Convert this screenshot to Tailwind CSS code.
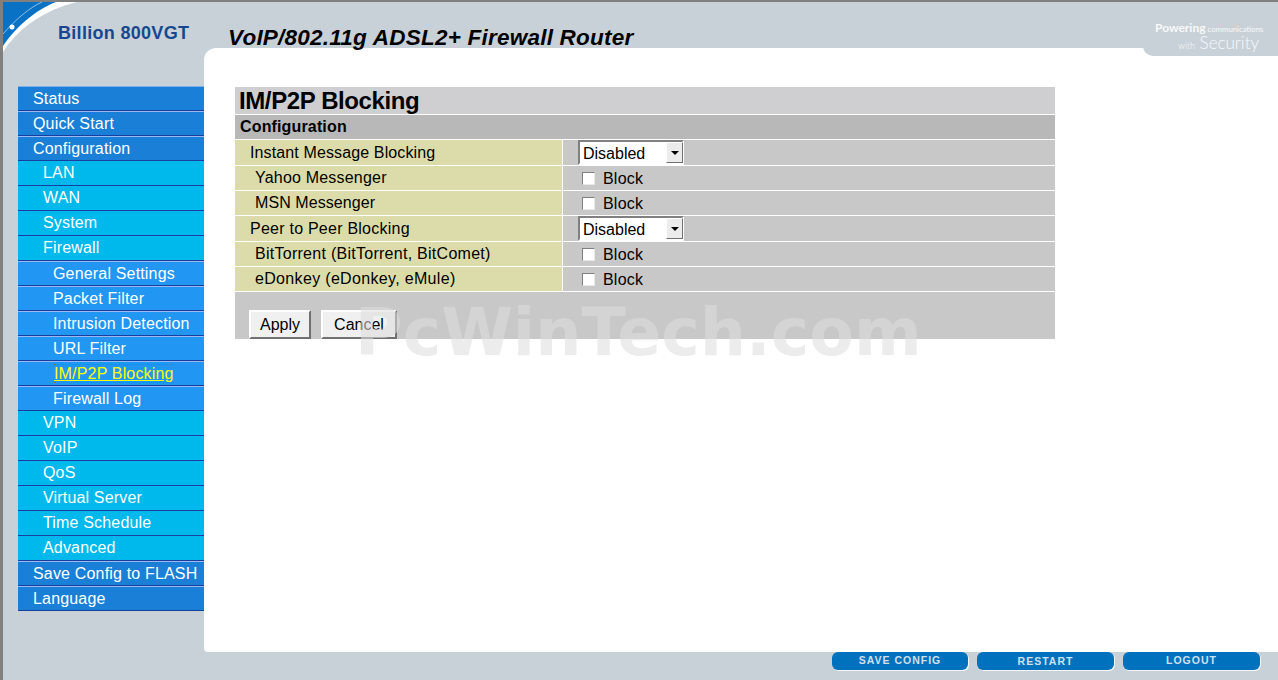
<!DOCTYPE html>
<html lang="en">
  <head>
    <meta charset="UTF-8" />
    <title>Billion 800VGT</title>
    <script src="https://cdn.jsdelivr.net/npm/@tailwindcss/browser@4"></script>
  </head>
  <body class="w-[1278px] h-[680px] overflow-hidden bg-[#c9d1d8] font-['Liberation_Sans',Arial,sans-serif] text-black">
    <div class="relative h-full flex flex-col border-t-2 border-l-[3px] border-[#808080]">
      <!-- logo corner -->
      <svg class="absolute left-0 top-0" width="76" height="52" viewBox="0 0 76 52">
        <path d="M0 50 C14 28 40 8 74 0 L53 0 C32 6 14 20 0 40 Z" fill="#ffffff" />
        <path d="M0 44 C12 26 32 8 53 0 L0 0 Z" fill="#0a72c4" />
        <path d="M0 32 C12 18 26 6 39 0" fill="none" stroke="#8fc0e6" stroke-width="1" />
        <circle cx="9" cy="25" r="2.5" fill="#ffffff" />
      </svg>

      <!-- header -->
      <header class="relative h-[46px] shrink-0">
        <div class="absolute left-[55px] top-[20px] text-[18px] leading-[22px] font-bold tracking-[0.3px] text-[#17488f]">Billion 800VGT</div>
        <div class="absolute left-[225px] top-[23px] text-[22.5px] leading-[26px] font-bold italic tracking-[0.23px] whitespace-nowrap">VoIP/802.11g ADSL2+ Firewall Router</div>
      </header>

      <div class="flex flex-1 min-h-0">
        <!-- sidebar -->
        <nav class="w-[186px] ml-[15px] pt-[38px] shrink-0 text-[16px] tracking-[0.17px] text-white">
          <a class="h-[25px] flex items-center pl-[15px] bg-[#1a7fd6] border-t border-t-[#7fb0ee] border-b border-b-[#173f9e]">Status</a>
          <a class="h-[25px] flex items-center pl-[15px] bg-[#1a7fd6] border-t border-t-[#9db8f0] border-b border-b-[#173f9e]">Quick Start</a>
          <a class="h-[25px] flex items-center pl-[15px] bg-[#1a7fd6] border-t border-t-[#9db8f0] border-b border-b-[#173f9e]">Configuration</a>
          <a class="h-[25px] flex items-center pl-[25px] bg-[#00b9ec] border-b border-b-[#173f9e]">LAN</a>
          <a class="h-[25px] flex items-center pl-[25px] bg-[#00b9ec] border-b border-b-[#173f9e]">WAN</a>
          <a class="h-[25px] flex items-center pl-[25px] bg-[#00b9ec] border-b border-b-[#173f9e]">System</a>
          <a class="h-[25px] flex items-center pl-[25px] bg-[#00b9ec] border-b border-b-[#173f9e]">Firewall</a>
          <a class="h-[25px] flex items-center pl-[35px] bg-[#2196f3] border-t border-t-[#9db8f0] border-b border-b-[#173f9e]">General Settings</a>
          <a class="h-[25px] flex items-center pl-[35px] bg-[#2196f3] border-t border-t-[#9db8f0] border-b border-b-[#173f9e]">Packet Filter</a>
          <a class="h-[25px] flex items-center pl-[35px] bg-[#2196f3] border-t border-t-[#9db8f0] border-b border-b-[#173f9e]">Intrusion Detection</a>
          <a class="h-[25px] flex items-center pl-[35px] bg-[#2196f3] border-t border-t-[#9db8f0] border-b border-b-[#173f9e]">URL Filter</a>
          <a class="h-[25px] flex items-center pl-[35px] bg-[#2196f3] border-t border-t-[#9db8f0] border-b border-b-[#173f9e]"><span class="ml-px text-[#ffff00] underline leading-[17px] border-y border-dotted border-y-[#b4601c]">IM/P2P Blocking</span></a>
          <a class="h-[25px] flex items-center pl-[35px] bg-[#2196f3] border-t border-t-[#9db8f0] border-b border-b-[#173f9e]">Firewall Log</a>
          <a class="h-[25px] flex items-center pl-[25px] bg-[#00b9ec] border-b border-b-[#173f9e]">VPN</a>
          <a class="h-[25px] flex items-center pl-[25px] bg-[#00b9ec] border-b border-b-[#173f9e]">VoIP</a>
          <a class="h-[25px] flex items-center pl-[25px] bg-[#00b9ec] border-b border-b-[#173f9e]">QoS</a>
          <a class="h-[25px] flex items-center pl-[25px] bg-[#00b9ec] border-b border-b-[#173f9e]">Virtual Server</a>
          <a class="h-[25px] flex items-center pl-[25px] bg-[#00b9ec] border-b border-b-[#173f9e]">Time Schedule</a>
          <a class="h-[25px] flex items-center pl-[25px] bg-[#00b9ec] border-b border-b-[#173f9e]">Advanced</a>
          <a class="h-[25px] flex items-center pl-[15px] bg-[#1a7fd6] border-t border-t-[#9db8f0] border-b border-b-[#173f9e]">Save Config to FLASH</a>
          <a class="h-[25px] flex items-center pl-[15px] bg-[#1a7fd6] border-t border-t-[#9db8f0] border-b border-b-[#173f9e]">Language</a>
        </nav>

        <!-- content panel -->
        <main class="flex-1 h-[604px] bg-white rounded-tl-[12px] rounded-bl-[4px] pt-[39px] pl-[31px]">
          <div class="w-[820px] flex flex-col gap-px text-[16px]">
            <div class="h-[27px] flex items-center pl-1 bg-[#cfcfd1] text-[24px] font-bold tracking-[-0.4px]">IM/P2P Blocking</div>
            <div class="h-[24px] flex items-center pl-[5px] bg-[#b8b8b8] font-bold tracking-[0.15px]">Configuration</div>

            <div class="h-[25px] grid grid-cols-[327px_1fr] gap-px">
              <div class="flex items-center pl-[15px] bg-[#dcdcaa] tracking-[0.125px]">Instant Message Blocking</div>
              <div class="flex items-center pl-[15px] bg-[#c8c8c8]">
                <div class="relative w-[106px] h-[25px]">
                  <select class="appearance-none w-full h-full pl-[3px] pb-1 bg-white border-2 border-t-[#808080] border-l-[#808080] border-b-white border-r-white rounded-none"><option>Disabled</option></select>
                  <span class="absolute right-px top-[2px] w-[17px] h-[21px] flex items-center justify-center bg-[#ececec] border border-t-white border-l-white border-b-[#707070] border-r-[#707070]">
                    <svg width="8" height="4" viewBox="0 0 8 4"><path d="M0 0H8L4 4Z" fill="#000" /></svg>
                  </span>
                </div>
              </div>
            </div>
            <div class="h-[24px] grid grid-cols-[327px_1fr] gap-px">
              <div class="flex items-center pl-5 bg-[#dcdcaa] tracking-[0.2px]">Yahoo Messenger</div>
              <label class="flex items-center pl-[19px] gap-2 bg-[#c8c8c8]"><input type="checkbox" class="appearance-none w-[13px] h-[13px] bg-white border border-t-[#808080] border-l-[#808080] border-b-[#e8e8e8] border-r-[#e8e8e8]" /><span class="leading-[20px] pt-[2px] tracking-[0.2px]">Block</span></label>
            </div>
            <div class="h-[24px] grid grid-cols-[327px_1fr] gap-px">
              <div class="flex items-center pl-5 bg-[#dcdcaa] tracking-[0.08px]">MSN Messenger</div>
              <label class="flex items-center pl-[19px] gap-2 bg-[#c8c8c8]"><input type="checkbox" class="appearance-none w-[13px] h-[13px] bg-white border border-t-[#808080] border-l-[#808080] border-b-[#e8e8e8] border-r-[#e8e8e8]" /><span class="leading-[20px] pt-[2px] tracking-[0.2px]">Block</span></label>
            </div>
            <div class="h-[25px] grid grid-cols-[327px_1fr] gap-px">
              <div class="flex items-center pl-[15px] bg-[#dcdcaa] tracking-[0.24px]">Peer to Peer Blocking</div>
              <div class="flex items-center pl-[15px] bg-[#c8c8c8]">
                <div class="relative w-[106px] h-[25px]">
                  <select class="appearance-none w-full h-full pl-[3px] pb-1 bg-white border-2 border-t-[#808080] border-l-[#808080] border-b-white border-r-white rounded-none"><option>Disabled</option></select>
                  <span class="absolute right-px top-[2px] w-[17px] h-[21px] flex items-center justify-center bg-[#ececec] border border-t-white border-l-white border-b-[#707070] border-r-[#707070]">
                    <svg width="8" height="4" viewBox="0 0 8 4"><path d="M0 0H8L4 4Z" fill="#000" /></svg>
                  </span>
                </div>
              </div>
            </div>
            <div class="h-[24px] grid grid-cols-[327px_1fr] gap-px">
              <div class="flex items-center pl-5 bg-[#dcdcaa] tracking-[0.27px]">BitTorrent (BitTorrent, BitComet)</div>
              <label class="flex items-center pl-[19px] gap-2 bg-[#c8c8c8]"><input type="checkbox" class="appearance-none w-[13px] h-[13px] bg-white border border-t-[#808080] border-l-[#808080] border-b-[#e8e8e8] border-r-[#e8e8e8]" /><span class="leading-[20px] pt-[2px] tracking-[0.2px]">Block</span></label>
            </div>
            <div class="h-[24px] grid grid-cols-[327px_1fr] gap-px">
              <div class="flex items-center pl-5 bg-[#dcdcaa] tracking-[0.33px]">eDonkey (eDonkey, eMule)</div>
              <label class="flex items-center pl-[19px] gap-2 bg-[#c8c8c8]"><input type="checkbox" class="appearance-none w-[13px] h-[13px] bg-white border border-t-[#808080] border-l-[#808080] border-b-[#e8e8e8] border-r-[#e8e8e8]" /><span class="leading-[20px] pt-[2px] tracking-[0.2px]">Block</span></label>
            </div>

            <div class="h-[47px] flex items-end gap-[10px] pl-[14px] bg-[#c8c8c8]">
              <button class="w-[62px] h-[29px] bg-[#f0f0f0] border-2 border-t-white border-l-white border-b-[#707070] border-r-[#707070]">Apply</button>
              <button class="w-[76px] h-[29px] bg-[#f0f0f0] border-2 border-t-white border-l-white border-b-[#707070] border-r-[#707070]">Cancel</button>
            </div>
          </div>
        </main>
      </div>

      <!-- bottom buttons -->
      <footer class="h-[28px] -mt-px shrink-0 flex justify-end gap-[9px] pr-[18px] text-[10.5px] font-bold tracking-[1px] text-[#cfe0ee]">
        <a class="w-[136px] h-[18px] flex items-center justify-center rounded-[6px] bg-[#0072bd] shadow-[1px_1px_0_#f4f6f8]">SAVE CONFIG</a>
        <a class="w-[137px] h-[18px] pt-px flex items-center justify-center rounded-[6px] bg-[#0072bd] shadow-[1px_1px_0_#f4f6f8]">RESTART</a>
        <a class="w-[137px] h-[18px] flex items-center justify-center rounded-[6px] bg-[#0072bd] shadow-[1px_1px_0_#f4f6f8]">LOGOUT</a>
      </footer>

      <!-- top right tab -->
      <div class="absolute right-0 top-[15px] w-[135px] h-[39px] rounded-bl-[10px] bg-[#c9d1d8] text-[#f8f9fa] font-['Lato',sans-serif] whitespace-nowrap">
        <div class="absolute left-[12px] top-[5px] h-[12px] text-[7.8px] leading-[12px]"><span class="text-[12px] font-bold">Powering</span> communications</div>
        <div class="absolute right-[19px] top-[17px] h-[18px] text-[17px] leading-[18px] font-light"><span class="text-[9px]">with</span> Security</div>
      </div>

      <!-- watermark -->
      <div class="absolute left-[352px] top-[294px] text-[65px] leading-[74px] font-bold font-['DejaVu_Sans',sans-serif] text-[#dddddd]/56 whitespace-nowrap pointer-events-none">PcWinTech.com</div>
    </div>
  </body>
</html>
